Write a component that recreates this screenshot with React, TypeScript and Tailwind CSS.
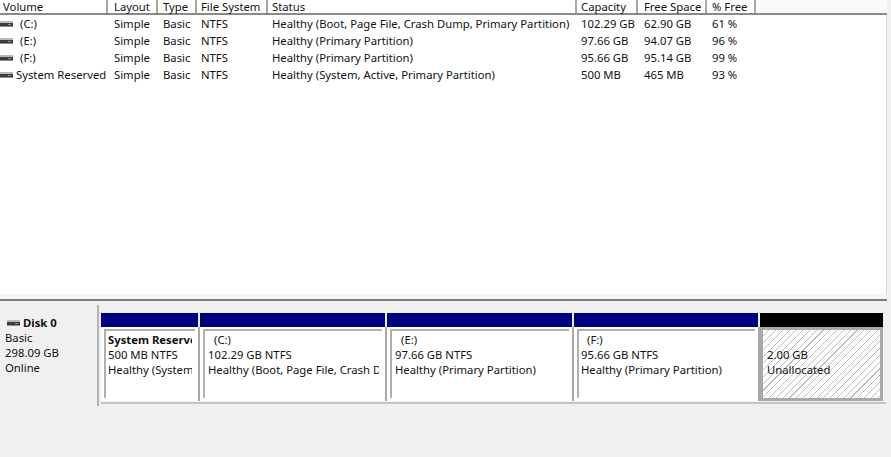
const font = { fontFamily: '"Noto Sans", "Open Sans", sans-serif' };

function Drive({ className = "" }: { className?: string }) {
  return (
    <svg width="13" height="6" viewBox="0 0 13 6" className={`shrink-0 ${className}`}>
      <rect x="0" y="0" width="13" height="2" fill="#b8b8b8" />
      <rect x="0" y="2" width="13" height="3" fill="#3c3c3c" />
      <rect x="0" y="5" width="13" height="1" fill="#8c8c8c" />
      <rect x="8" y="3" width="3" height="1" fill="#35d04a" />
    </svg>
  );
}

const headers = [
  { t: "Volume", c: "w-[108px] pl-[3px]" },
  { t: "Layout", c: "w-[50px] pl-[6px]" },
  { t: "Type", c: "w-[39px] pl-[5px]" },
  { t: "File System", c: "w-[71px] pl-[4px]" },
  { t: "Status", c: "w-[309px] pl-[4px]" },
  { t: "Capacity", c: "w-[61px] pl-[4px]" },
  { t: "Free Space", c: "w-[69px] pl-[6px]" },
  { t: "% Free", c: "w-[49px] pl-[5px]" },
];

const rows = [
  ["(C:)", "Healthy (Boot, Page File, Crash Dump, Primary Partition)", "102.29 GB", "62.90 GB", "61 %"],
  ["(E:)", "Healthy (Primary Partition)", "97.66 GB", "94.07 GB", "96 %"],
  ["(F:)", "Healthy (Primary Partition)", "95.66 GB", "95.14 GB", "99 %"],
  ["System Reserved", "Healthy (System, Active, Primary Partition)", "500 MB", "465 MB", "93 %"],
];

const partitions = [
  { w: "w-[99px]", pad: "pl-[2px]", name: "System Reserved", size: "500 MB NTFS", st: "Healthy (System, Active, Primary Partition)", bold: true },
  { w: "w-[187px]", pad: "pl-[3px]", name: "(C:)", size: "102.29 GB NTFS", st: "Healthy (Boot, Page File, Crash Dump, Primary Partition)", bold: false },
  { w: "w-[187px]", pad: "pl-[3px]", name: "(E:)", size: "97.66 GB NTFS", st: "Healthy (Primary Partition)", bold: false },
  { w: "w-[186px]", pad: "pl-[2px]", name: "(F:)", size: "95.66 GB NTFS", st: "Healthy (Primary Partition)", bold: false },
];

export default function App() {
  return (
    <div style={font} className="w-[891px] h-[457px] overflow-hidden flex flex-col bg-[#f0f0f0] text-[11.3px] leading-[15px] text-[#111]">
      <div className="h-[15px] shrink-0 flex bg-[#fafafa] border-b-2 border-[#8a8a8a] mr-[4px]">
        {headers.map((h) => (
          <div key={h.t} className={`${h.c} h-[13px] leading-[13px] border-r-2 border-[#a8a8a8] shrink-0 bg-white whitespace-nowrap`}>
            {h.t}
          </div>
        ))}
      </div>

      <div className="h-[279px] shrink-0 bg-white border-r border-[#d8d8d8] mr-[4px]">
        {rows.map((r) => {
          const sys = r[0] === "System Reserved";
          return (
            <div key={r[0]} className="flex h-[17px] items-center whitespace-nowrap">
              <div className="w-[108px] shrink-0 flex items-center">
                <Drive />
                <span className={sys ? "ml-[3px]" : "ml-[7px]"}>{r[0]}</span>
              </div>
              <div className="w-[50px] shrink-0 pl-[6px]">Simple</div>
              <div className="w-[39px] shrink-0 pl-[5px]">Basic</div>
              <div className="w-[71px] shrink-0 pl-[4px]">NTFS</div>
              <div className="w-[309px] shrink-0 pl-[4px]">{r[1]}</div>
              <div className="w-[61px] shrink-0 pl-[4px]">{r[2]}</div>
              <div className="w-[69px] shrink-0 pl-[6px]">{r[3]}</div>
              <div className="w-[49px] shrink-0 pl-[5px]">{r[4]}</div>
            </div>
          );
        })}
      </div>

      <div className="h-[7px] shrink-0 bg-[#f4f4f4] border-b-2 border-[#7d7d7d] mr-[4px]" />

      <div className="h-[105px] shrink-0 flex mr-[5px]">
        <div className="w-[99px] h-[104px] shrink-0 mt-[4px] pl-[5px] pt-[10px] border-r-2 border-b border-[#b4b4b4]">
          <div className="flex items-center h-[15px] font-bold">
            <Drive className="ml-[2px] mr-[3px]" />
            <span>Disk 0</span>
          </div>
          <div>Basic</div>
          <div>298.09 GB</div>
          <div>Online</div>
        </div>
        <div className="flex-1 ml-[2px] mt-[4px] h-[99px] pt-[8px] border-b-2 border-[#c4c4c4] bg-[#f0f0f0]">
          <div className="flex">
            {partitions.map((p) => (
              <div key={p.size} className={`${p.w} shrink-0 flex flex-col`}>
                <div className="h-[14px] mr-[2px] bg-[#000080]" />
                <div className={`h-[74px] bg-white border-r-2 border-[#a8a8a8] pt-[2px] pr-[3px] ${p.pad === "pl-[2px]" ? "pl-[3px]" : "pl-[3px]"}`}>
                  <div className={`h-[69px] border-l-2 border-t-2 border-[#b0b0b0] pt-[1px] ${p.pad}`}>
                    <div className="overflow-hidden whitespace-nowrap mr-[3px]">
                      <div className={p.bold ? "font-bold" : "pl-[6px]"}>{p.name}</div>
                      <div>{p.size}</div>
                      <div>{p.st}</div>
                    </div>
                  </div>
                </div>
              </div>
            ))}
            <div className="w-[123px] shrink-0 flex flex-col">
              <div className="h-[14px] bg-black" />
              <div className="h-[74px] border-[3px] border-[#a8a8a8] bg-white bg-[repeating-linear-gradient(135deg,#ffffff_0px,#ffffff_4px,#bcbcbc_4px,#bcbcbc_4.8px)] pl-[4px] pt-[17px]">
                <div>2.00 GB</div>
                <div>Unallocated</div>
              </div>
            </div>
          </div>
        </div>
      </div>

      <div className="flex-1 bg-[#f0f0f0]" />
    </div>
  );
}
